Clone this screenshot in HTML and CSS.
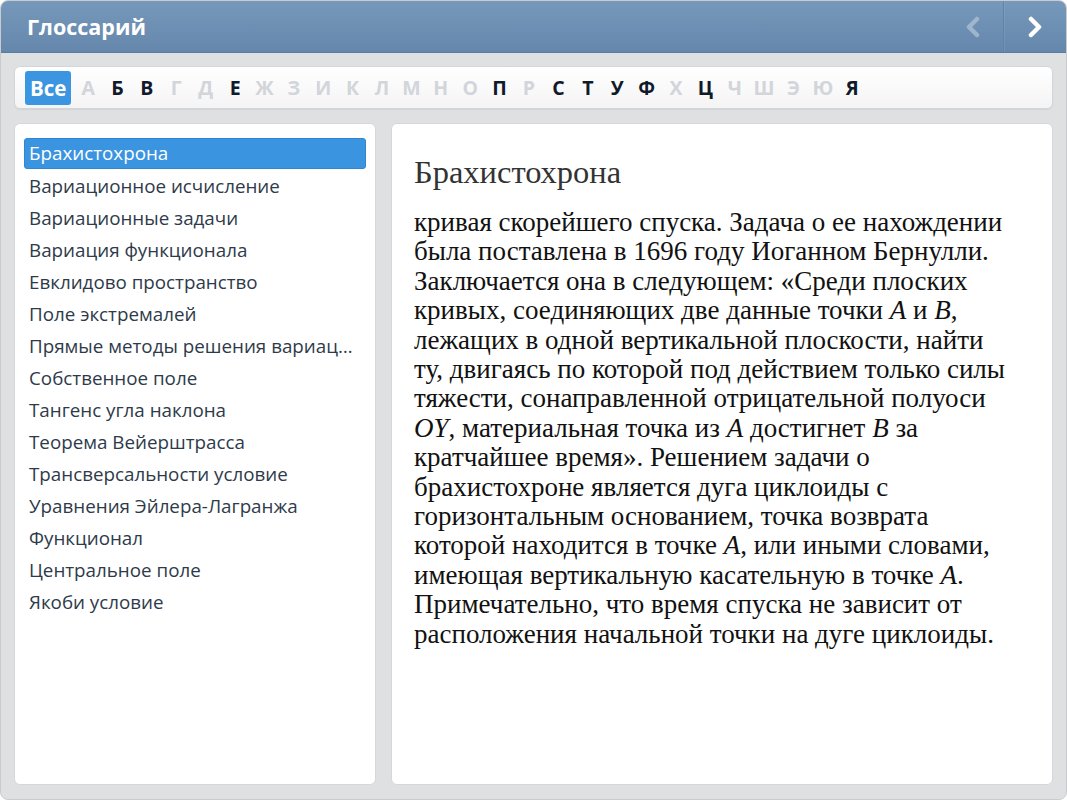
FILE: index.html
```html
<!DOCTYPE html>
<html lang="ru">
<head>
<meta charset="utf-8">
<title>Глоссарий</title>
<link rel="stylesheet" href="styles.css">
</head>
<body>
<div class="window">
  <header class="header">
    <h1 class="title">Глоссарий</h1>
    <div class="nav">
      <button class="nav-btn disabled" aria-label="Назад">
        <svg width="16" height="22" viewBox="0 0 16 22"><polyline points="12,3 4,11 12,19" fill="none" stroke="currentColor" stroke-width="4.5" stroke-linecap="round" stroke-linejoin="round"/></svg>
      </button>
      <span class="nav-sep"></span>
      <button class="nav-btn" aria-label="Вперёд">
        <svg width="16" height="22" viewBox="0 0 16 22"><polyline points="4,3 12,11 4,19" fill="none" stroke="currentColor" stroke-width="4.5" stroke-linecap="round" stroke-linejoin="round"/></svg>
      </button>
    </div>
  </header>
  <nav class="alphabet">
    <span class="all">Все</span>
    <span class="letter">А</span>
    <span class="letter on">Б</span>
    <span class="letter on">В</span>
    <span class="letter">Г</span>
    <span class="letter">Д</span>
    <span class="letter on">Е</span>
    <span class="letter">Ж</span>
    <span class="letter">З</span>
    <span class="letter">И</span>
    <span class="letter">К</span>
    <span class="letter">Л</span>
    <span class="letter">М</span>
    <span class="letter">Н</span>
    <span class="letter">О</span>
    <span class="letter on">П</span>
    <span class="letter">Р</span>
    <span class="letter on">С</span>
    <span class="letter on">Т</span>
    <span class="letter on">У</span>
    <span class="letter on">Ф</span>
    <span class="letter">Х</span>
    <span class="letter on">Ц</span>
    <span class="letter">Ч</span>
    <span class="letter">Ш</span>
    <span class="letter">Э</span>
    <span class="letter">Ю</span>
    <span class="letter on">Я</span>
  </nav>
  <main class="content">
    <aside class="panel list-panel">
      <ul class="terms">
        <li class="term selected">Брахистохрона</li>
        <li class="term">Вариационное исчисление</li>
        <li class="term">Вариационные задачи</li>
        <li class="term">Вариация функционала</li>
        <li class="term">Евклидово пространство</li>
        <li class="term">Поле экстремалей</li>
        <li class="term">Прямые методы решения вариационных задач</li>
        <li class="term">Собственное поле</li>
        <li class="term">Тангенс угла наклона</li>
        <li class="term">Теорема Вейерштрасса</li>
        <li class="term">Трансверсальности условие</li>
        <li class="term">Уравнения Эйлера-Лагранжа</li>
        <li class="term">Функционал</li>
        <li class="term">Центральное поле</li>
        <li class="term">Якоби условие</li>
      </ul>
    </aside>
    <article class="panel article">
      <h2 class="article-title">Брахистохрона</h2>
      <p class="article-text">кривая скорейшего спуска. Задача о ее нахождении была поставлена в 1696 году Иоганном Бернулли. Заключается она в следующем: «Среди плоских кривых, соединяющих две данные точки <i>A</i> и <i>B</i>, лежащих в одной вертикальной плоскости, найти ту, двигаясь по которой под действием только силы тяжести, сонаправленной отрицательной полуоси <i>OY</i>, материальная точка из <i>A</i> достигнет <i>B</i> за кратчайшее время». Решением задачи о брахистохроне является дуга циклоиды с горизонтальным основанием, точка возврата которой находится в точке <i>A</i>, или иными словами, имеющая вертикальную касательную в точке <i>A</i>. Примечательно, что время спуска не зависит от расположения начальной точки на дуге циклоиды.</p>
    </article>
  </main>
</div>
</body>
</html>
```

FILE: styles.css
```css
* { box-sizing: border-box; }
html, body { margin: 0; padding: 0; }
body {
  width: 1067px;
  height: 800px;
  background: #ffffff;
  font-family: "Open Sans", "Noto Sans", sans-serif;
  overflow: hidden;
}
.window {
  width: 1067px;
  height: 800px;
  background: #dfe0e2;
  border: 1px solid #c9cbce;
  border-radius: 8px;
  overflow: hidden;
  display: flex;
  flex-direction: column;
}
.header {
  height: 52px;
  flex: none;
  background: linear-gradient(#7698ba, #6587ac);
  border-bottom: 1px solid #5a7ca1;
  display: flex;
  align-items: center;
  justify-content: space-between;
  padding-left: 26px;
}
.title {
  margin: 0;
  font-size: 21.5px;
  font-weight: 700;
  color: #ffffff;
  letter-spacing: 0;
}
.nav {
  display: flex;
  align-items: stretch;
  height: 100%;
}
.nav-btn {
  width: 62px;
  border: 0;
  background: transparent;
  color: #ffffff;
  padding: 0;
  display: flex;
  align-items: center;
  justify-content: center;
}
.nav-btn.disabled { color: #9fb5cc; width: 60px; }
.nav-sep {
  width: 1px;
  background: #6183a8;
  box-shadow: 1px 0 0 rgba(255,255,255,0.08);
}
.alphabet {
  flex: none;
  margin: 13px 13px 0 13px;
  height: 43px;
  background: linear-gradient(#ffffff, #f4f4f5);
  border: 1px solid #d3d5d8;
  border-radius: 6px;
  box-shadow: 0 1px 1px rgba(0,0,0,0.06);
  display: flex;
  align-items: center;
  padding-left: 10px;
  font-weight: 700;
  font-size: 20.5px;
}
.all {
  background: #3b95e1;
  color: #ffffff;
  border-radius: 3px;
  height: 34px;
  padding: 0 5px;
  display: flex;
  align-items: center;
  margin-right: 2px;
}
.letter {
  width: 29.4px;
  text-align: center;
  color: #d2d5d9;
  font-size: 19.5px;
}
.letter.on { color: #111a2a; }
.content {
  flex: 1;
  display: flex;
  gap: 15px;
  padding: 14px 13px 14px 13px;
  min-height: 0;
}
.panel {
  background: #ffffff;
  border-radius: 6px;
  border: 1px solid #d6d7da;
}
.list-panel {
  width: 362px;
  flex: none;
  padding: 14px 9px;
}
.terms {
  list-style: none;
  margin: 0;
  padding: 0;
}
.term {
  height: 32px;
  line-height: 30px;
  padding: 0 4px;
  font-size: 18.8px;
  color: #2e3a4a;
  white-space: nowrap;
  overflow: hidden;
  text-overflow: ellipsis;
  border: 1px solid transparent;
  border-radius: 3px;
}
.term.selected {
  background: #3a94e0;
  border-color: #2f86d2;
  color: #ffffff;
  height: 31px;
  margin-bottom: 1px;
  line-height: 29px;
}
.article {
  flex: 1;
  padding: 26px 39px 22px 22px;
  font-family: "Liberation Serif", "Times New Roman", serif;
  color: #1a1a1a;
}
.article-title {
  margin: 0 0 14px 0;
  font-size: 32.5px;
  font-weight: 400;
  color: #333333;
  line-height: 44px;
}
.article-text {
  margin: 0;
  font-size: 27px;
  line-height: 29.4px;
  color: #111111;
}
.article-text i { font-style: italic; }
```
